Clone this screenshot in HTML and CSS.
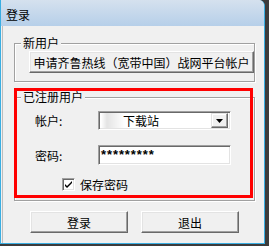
FILE: index.html
```html
<!DOCTYPE html>
<html lang="zh-CN">
<head>
    <meta charset="UTF-8">
    <meta name="viewport" content="width=device-width, initial-scale=1.0">
    <title>登录</title>
    <link rel="stylesheet" href="styles.css">
</head>
<body>
    <div class="window">
        <div class="titlebar">登录</div>

        <div class="client">

            <div class="group group-new">
                <span class="legend">新用户</span>
                <button class="btn btn-apply">申请齐鲁热线（宽带中国）战网平台帐户</button>
            </div>

            <div class="group group-reg">
                <span class="legend">已注册用户</span>

                <div class="row row-account">
                    <span class="label">帐户:</span>
                    <div class="field combo">
                        <span class="combo-text">下载站</span>
                        <span class="combo-arrow">
                            <svg width="7" height="4" viewBox="0 0 7 4"><path d="M0 0H7L3.5 4Z" fill="#000"/></svg>
                        </span>
                    </div>
                </div>

                <div class="row row-pass">
                    <span class="label">密码:</span>
                    <div class="field pass">*********</div>
                </div>

                <div class="check-row">
                    <span class="checkbox">
                        <svg width="9" height="9" viewBox="0 0 9 9"><path d="M1 4L3 6L8 1V3L3 8L1 6Z" fill="#000"/></svg>
                    </span>
                    <span>保存密码</span>
                </div>
            </div>

            <div class="actions">
                <button class="btn btn-action">登录</button>
                <button class="btn btn-action">退出</button>
            </div>

        </div>

        <div class="highlight"></div>
    </div>
</body>
</html>
```

FILE: styles.css
```css
body {
    margin: 0;
    width: 269px;
    height: 246px;
    background-color: #3c3c3c;
    font-family: "Noto Sans CJK SC", "Noto Sans", sans-serif;
    font-size: 12px;
    color: #000;
    overflow: hidden;
}
.window {
    position: relative;
    box-sizing: border-box;
    width: 265px;
    height: 244px;
    border: 1px solid #3aaee2;
    border-top: none;
    border-top-right-radius: 6px;
    background-color: #f0f0f0;
    overflow: hidden;
}
.titlebar {
    box-sizing: border-box;
    height: 26px;
    padding: 9px 0 0 5px;
    line-height: 12px;
    background: linear-gradient(#d5e1ee, #b6cfe9);
}
.client {
    height: 217px;
    padding: 17px 0 0 13px;
    box-sizing: border-box;
    background: linear-gradient(90deg, #f0f0f0 1px, #bdbdbd 1px, #bdbdbd 2px, #f0f0f0 2px);
}
.group {
    box-sizing: border-box;
    width: 241px;
    border: 1px solid #a0a0a0;
    box-shadow: 1px 1px 0 #fff, inset 1px 1px 0 #fff;
}
.legend {
    display: block;
    width: fit-content;
    margin: -7px 0 0 6px;
    padding: 0 2px;
    line-height: 12px;
    background-color: #f0f0f0;
}
.group-new {
    height: 39px;
}
.group-reg {
    height: 104px;
    margin-top: 15px;
}
.btn {
    box-sizing: border-box;
    margin: 0;
    padding: 0;
    font: inherit;
    color: #000;
    background-color: #f0f0f0;
    border: 1px solid;
    border-color: #fff #696969 #696969 #fff;
    box-shadow: inset -1px -1px 0 #a0a0a0, inset 1px 1px 0 #e3e3e3;
}
.btn-apply {
    display: block;
    width: 225px;
    height: 22px;
    margin: 2px 0 0 14px;
}
.row {
    display: grid;
    grid-template-columns: 63px 133px;
    align-items: center;
    padding-left: 20px;
}
.row-account {
    margin-top: 8px;
}
.row-pass {
    margin-top: 15px;
}
.field {
    box-sizing: border-box;
    background-color: #fff;
    border: 1px solid;
    border-color: #a0a0a0 #fff #fff #a0a0a0;
    box-shadow: inset 1px 1px 0 #696969, inset -1px -1px 0 #e3e3e3;
}
.combo {
    display: flex;
    align-items: center;
    height: 19px;
    padding: 0 2px 0 24px;
    background: linear-gradient(90deg, #fff 2px, #e4e4e4 8px, #fff 26px);
}
.combo-text {
    flex: 1;
}
.combo-arrow {
    box-sizing: border-box;
    display: flex;
    align-items: center;
    justify-content: center;
    width: 17px;
    height: 15px;
    background-color: #f0f0f0;
    border: 1px solid;
    border-color: #e3e3e3 #696969 #696969 #e3e3e3;
    box-shadow: inset -1px -1px 0 #a0a0a0, inset 1px 1px 0 #fff;
}
.pass {
    height: 20px;
    padding: 2px 0 0 2px;
    font-family: "Liberation Sans", sans-serif;
    font-size: 13px;
    font-weight: bold;
    line-height: 14px;
    letter-spacing: 0.9px;
}
.check-row {
    display: flex;
    align-items: center;
    gap: 5px;
    margin-top: 13px;
    padding-left: 47px;
    height: 13px;
}
.checkbox {
    box-sizing: border-box;
    display: flex;
    align-items: center;
    justify-content: center;
    width: 13px;
    height: 13px;
    background-color: #fff;
    border: 1px solid;
    border-color: #a0a0a0 #fff #fff #a0a0a0;
    box-shadow: inset 1px 1px 0 #696969, inset -1px -1px 0 #e3e3e3;
}
.actions {
    display: flex;
    gap: 13px;
    margin: 10px 0 0 16px;
}
.btn-action {
    width: 98px;
    height: 22px;
}
.highlight {
    position: absolute;
    left: 13px;
    top: 88px;
    width: 239px;
    height: 110px;
    box-sizing: border-box;
    border: 3px solid #ff0000;
}
```
